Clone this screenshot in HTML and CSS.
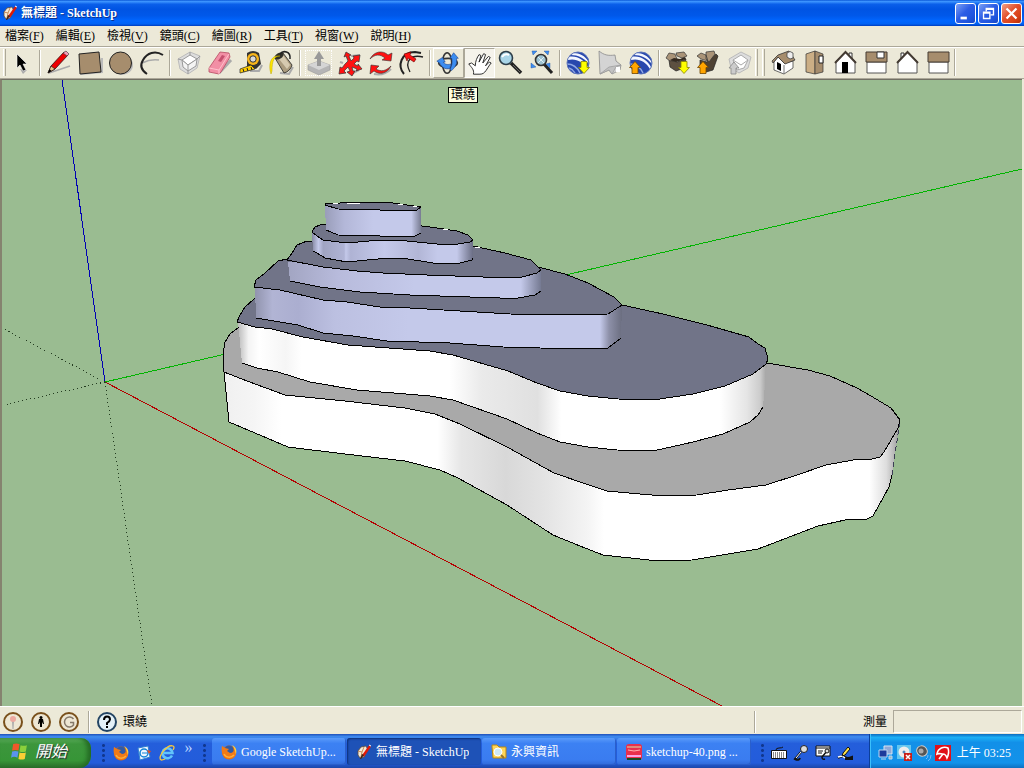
FILE: index.html
```html
<!DOCTYPE html>
<html lang="zh-Hant">
<head>
<meta charset="utf-8">
<title>無標題 - SketchUp</title>
<link rel="stylesheet" href="styles.css">
</head>
<body>
<svg class="defs" aria-hidden="true">
  <defs>
    <symbol id="app" viewBox="0 0 16 16"><path d="M2 7 5 3l5-1 2 4-4 7-4 1-2-3z" fill="#f4ead8" stroke="#5b4a3c" stroke-width=".8"/><path d="M2 7l4 1 2-5M6 8l-1 5" fill="none" stroke="#c88a55"/><path d="M14 2 7 12" stroke="#e01808" stroke-width="2.4"/><path d="m8 11-3 4-1 0 2-5z" fill="#421"/><path d="m13 1 2 1" stroke="#fff"/></symbol>
    <symbol id="firefox" viewBox="0 0 16 16"><circle cx="8" cy="8.5" r="7" fill="#e66a0c"/><circle cx="8" cy="6" r="4.600" fill="#315ba5"/><path d="M1 2c1 0 2 2 3 2l4 1-2 2 3 2c3 0 5-2 4-5 3 3 3 8-1 10C5 17-1 11 1 2z" fill="#f07a18"/><path d="M3 10c2 4 7 4 10 1" fill="none" stroke="#ffb03a" stroke-width="1.500"/><path d="M11 1c4 2 5 5 4 9-1-2-1-6-4-9z" fill="#ffd23c"/></symbol>
    <symbol id="arrowdn" viewBox="0 0 12 14"><path d="M3 1h6v6h2.500L6 13 .5 7H3z" fill="#ff0" stroke="#8a8700" stroke-width=".8"/></symbol>
    <symbol id="arrowup" viewBox="0 0 12 14"><path d="M3 13h6V7h2.500L6 1 .5 7H3z" fill="#ffa500" stroke="#704500" stroke-width=".8"/></symbol>
    <symbol id="globe" viewBox="0 0 24 24"><circle cx="12" cy="12" r="11" fill="#2847ad"/><path d="M2 6c9-2 16 3 20 10l-1 2C17 11 10 7 2 9zM7 2c7 0 12 3 15 8l1 3C18 7 12 4 5 4z" fill="#f4f7ff"/><path d="M1 13c5 0 10 3 13 9M3 17c3 1 5 3 6 5" fill="none" stroke="#90a8e4" stroke-width="1.500"/><circle cx="12" cy="12" r="11" fill="none" stroke="#5c74b8"/></symbol>
  </defs>
</svg>

<div class="desktop">
<header class="titlebar">
  <svg class="i16" aria-hidden="true"><use href="#app"/></svg>
  <h1>無標題 - SketchUp</h1>
  <div class="winbtns">
    <button class="wb" aria-label="最小化"><svg viewBox="0 0 21 21"><path d="M5 14h7v3H5z" fill="#fff"/></svg></button>
    <button class="wb" aria-label="還原"><svg viewBox="0 0 21 21"><path d="M8 8V5h8v7h-3M8 6h8M5 9h7v7H5zM5 10h7" fill="none" stroke="#fff" stroke-width="1.500"/></svg></button>
    <button class="wb close" aria-label="關閉"><svg viewBox="0 0 21 21"><path d="m5 5 11 11m0-11-11 11" stroke="#fff" stroke-width="2.500"/></svg></button>
  </div>
</header>

<nav class="menubar" aria-label="主選單">
  <button>檔案(<u>F</u>)</button><button>編輯(<u>E</u>)</button><button>檢視(<u>V</u>)</button><button>鏡頭(<u>C</u>)</button><button>繪圖(<u>R</u>)</button><button>工具(<u>T</u>)</button><button>視窗(<u>W</u>)</button><button>說明(<u>H</u>)</button>
</nav>

<div class="toolbar" role="toolbar" aria-label="工具列">
  <span class="edge"></span>
  <div class="tools">
    <button aria-label="選取"><svg viewBox="0 0 31 30"><path d="m14 21 3 5 4-4" fill="#aaa"/><path d="M11 6v14l3-3 3 6 3-1-3-6h4z" fill="#000" stroke="#fff" stroke-width=".6"/></svg></button>
    <span class="sep"></span>
    <button aria-label="線條"><svg viewBox="0 0 31 30"><path d="M6 25 27 18" stroke="#aaa" stroke-width="1.500"/><path d="m5 25 3-7 13-14 4 3-13 14z" fill="#e00" stroke="#311" stroke-width=".8"/><path d="m5 25 3-7 4 3z" fill="#e9c48a" stroke="#222" stroke-width=".7"/><path d="m5 25 1.500-4 2 2z"/><path d="m20 5 3-2 3 3-2 2z" fill="#f59ab4" stroke="#333" stroke-width=".6"/></svg></button>
    <button aria-label="矩形"><svg viewBox="0 0 31 30"><path d="m7 26 21-2V10" fill="none" stroke="#bbb" stroke-width="2"/><path d="m5 6 20-2 2 20-21 2z" fill="#a68d6d" stroke="#222"/></svg></button>
    <button aria-label="圓形"><svg viewBox="0 0 31 30"><ellipse cx="17" cy="17" rx="11" ry="10" fill="#bbb"/><circle cx="15.500" cy="15" r="11" fill="#a68d6d" stroke="#222"/></svg></button>
    <button aria-label="圓弧"><svg viewBox="0 0 31 30"><path d="M6 15c6-3 11-4 17-3" fill="none" stroke="#aaa" stroke-width="1.500"/><path d="M11 26C5 22 4 17 7 12 11 5 19 2 27 7" fill="none" stroke="#222" stroke-width="2"/></svg></button>
    <span class="sep"></span>
    <button aria-label="元件"><svg viewBox="0 0 31 30"><path d="m5 11 12-7 10 4-3 12-9 6-8-5z" fill="#ddd" stroke="#bbb"/><path d="m9 12 8-5 7 4-9 6z" fill="#fff" stroke="#999"/><path d="m9 12 6 5 9-6-1 7-8 5-5-4z" fill="#f4f4f4" stroke="#999"/><path d="m15 17v6M5 11l4 1m8-8v3m10 1-3 3M15 26v-3" fill="none" stroke="#999"/></svg></button>
    <button aria-label="擦除"><svg viewBox="0 0 31 30"><path d="m15 25 12-13" fill="none" stroke="#aaa" stroke-width="3"/><path d="M5 20 16 4l9 1 1 4-9 15-2 2-10-2z" fill="#f28fa5" stroke="#b64b62" stroke-width=".8"/><path d="m5 20 10 2L25 6M15 22v4" fill="none" stroke="#ffc0cc"/><path d="m14 13 4-6 3 1-4 6z" fill="#c6506e"/></svg></button>
    <button aria-label="捲尺"><svg viewBox="0 0 31 30"><path d="M15 23h9l3-6" stroke="#aaa" stroke-width="2" fill="none"/><path d="M12 5q6-4 12 0l2 11-5 5-9-2z" fill="#333"/><circle cx="18" cy="11" r="6" fill="#f7b51c"/><circle cx="18" cy="11" r="3.200" fill="#d9d9d9" stroke="#333"/><path d="m16 17-11 4v4l15-4z" fill="#fc0" stroke="#222" stroke-width=".7"/><path d="m8 21 1 3m3-4 1 3m3-4 1 3" stroke="#222"/></svg></button>
    <button aria-label="顏料桶"><svg viewBox="0 0 31 30"><path d="m14 25 9 1 4-7" stroke="#aaa" stroke-width="2" fill="none"/><path d="m9 10 8-5 9 12c-1 4-4 7-8 8z" fill="#aa9b7e" stroke="#222" stroke-width=".8"/><path d="m17 7 7 10-3 4-8-10z" fill="#d6cab0"/><ellipse cx="13" cy="8" rx="5" ry="3" transform="rotate(-30 13 8)" fill="#302f28"/><path d="M14 6c3-4 11-3 10 5" fill="none" stroke="#222" stroke-width="1.500"/><path d="M14 8c-6 0-8 5-8 15l-1 3-1-4C3 13 6 7 14 8z" fill="#ffe600" stroke="#bba600" stroke-width=".5"/></svg></button>
    <span class="sep"></span>
    <button class="ghost" aria-label="推拉"><svg viewBox="0 0 31 30"><path d="m5 17 11-4 11 4v5l-11 5-11-5z" fill="#b5b5b5" stroke="#999" stroke-width=".6"/><path d="m5 17 11 5 11-5-11-4z" fill="#d5d5d5"/><path d="M14 18v-7h-3l5-8 5 8h-3v7z" fill="#999"/></svg></button>
    <button aria-label="移動"><svg viewBox="0 0 31 30"><path d="m17 8 9-1M9 15l-3-1m19 8-8 4" stroke="#aaa" stroke-width="2"/><path d="M14 13 12 8l-2 1 2-5 5 3-2 1 2 5 3-3-1-2 7-1-1 7-2-1-3 3 4 2 0-2 4 5-6 2 1-2-5-2 1 4h2l-3 5-5-4 3-1-2-4-4 4 2 2-7 1 1-7 2 1 3-4z" fill="#f11" stroke="#333" stroke-width=".7"/></svg></button>
    <button aria-label="旋轉"><svg viewBox="0 0 31 30"><path d="M9 26q10 2 17-5" fill="none" stroke="#aaa" stroke-width="2"/><path d="M5 11C9 3 18 2 23 7l4-2-1 8-9-1 3-2C15 6 10 6 5 11zM26 18c-4 8-12 9-17 5l-4 3 1-9 8 1-3 3c5 3 10 2 15-3z" fill="#f11" stroke="#333" stroke-width=".6"/></svg></button>
    <button aria-label="偏移"><svg viewBox="0 0 31 30"><path d="M8 26C1 18 5 4 19 4l6 1" fill="none" stroke="#222" stroke-width="2"/><path d="M14 24C8 13 15 6 27 9" fill="none" stroke="#222" stroke-width="1.300"/><path d="M8 6l7-2-1 3 6 4-2 3-6-4-1 3z" fill="#f11" stroke="#600" stroke-width=".6"/></svg></button>
    <span class="sep"></span>
    <button class="hover" aria-label="環繞"><svg viewBox="0 0 31 30"><ellipse cx="15" cy="15" rx="10" ry="5" fill="none" stroke="#333" stroke-width="1.800"/><ellipse cx="14" cy="15" rx="5" ry="11" fill="none" stroke="#333" stroke-width="1.800"/><path d="m3 13 6-4 3 5h-2c2 3 5 3 8 2l-1 5c-5 1-9-1-11-6zM17 10l4-6 5 6h-2c1 6-1 9-5 13l-2-1c2-4 3-7 2-12z" fill="#3c8df0" stroke="#173d89" stroke-width=".6"/></svg></button>
    <button class="pressed" aria-label="平移"><svg viewBox="0 0 31 30"><path d="M9 27c1-5-2-7-5-11l3-1 4 3c0-5 2-9 4-12l2 1-2 7 5-9 2 1-3 9 6-7 2 1-5 9 4-4 2 1c-5 6-6 12-12 12z" fill="#fff" stroke="#222" stroke-width="1"/></svg></button>
    <button aria-label="縮放"><svg viewBox="0 0 31 30"><path d="m16 15 10 10" stroke="#222" stroke-width="3.500"/><path d="m18 17 7 7" stroke="#888" stroke-width=".7"/><circle cx="11" cy="10" r="6.500" fill="#a9d5e8" stroke="#2d3d48" stroke-width="1.600"/><path d="M7 9q3-4 7-2" stroke="#fff" stroke-width="2" fill="none"/></svg></button>
    <button aria-label="縮放範圍"><svg viewBox="0 0 31 30"><path d="m18 16 8 9" stroke="#222" stroke-width="3"/><circle cx="15" cy="12" r="5.500" fill="#9fc3d1" stroke="#333" stroke-width="1.600"/><path d="M12 9l6 6m0-6-6 6" stroke="#e1f0f4"/><path d="M6 3h5L7 7zM23 3h-5l4 4zM5 20v-5l5 4zM24 15v5l-4-4z" fill="#3d8cf0" stroke="#1a4b99" stroke-width=".4"/></svg></button>
    <span class="sep"></span>
    <button aria-label="取得目前視圖"><svg viewBox="0 0 31 30"><use href="#globe" x="3" y="3" width="24" height="24"/><use href="#arrowdn" x="15" y="12" width="12" height="15"/></svg></button>
    <button aria-label="切換地形"><svg viewBox="0 0 31 30"><path d="M5 3c5 4 9 5 16 4l1 6 5 4-1 5-8 4-3-4-9 4z" fill="#d4d4d4" stroke="#8a8a8a" stroke-width=".8"/><path d="m6 26 9-7 12-2-5 2-4 7-3-4z" fill="#c2c2c2" stroke="#999" stroke-width=".7"/><path d="M22 19h4v5h-4z" fill="#fff"/></svg></button>
    <button aria-label="放置模型"><svg viewBox="0 0 31 30"><use href="#globe" x="4" y="3" width="24" height="24"/><use href="#arrowup" x="4" y="12" width="12" height="15"/></svg></button>
    <span class="sep"></span>
    <button aria-label="取得模型"><svg viewBox="0 0 31 30"><path d="m7 12 8 2 9-3-2 9-8 3-6-4z" fill="#5d5040" stroke="#222" stroke-width=".7"/><path d="m4 10 3-5 6 1 2 5-7 2zM14 5l8-1 3 4-5 2-5-2z" fill="#aa9478" stroke="#333" stroke-width=".7"/><path d="m8 12 4-2 6 1 5-2 1 2-10 3z" fill="#342a20"/><use href="#arrowdn" x="16" y="12" width="12" height="15"/></svg></button>
    <button aria-label="共用模型"><svg viewBox="0 0 31 30"><path d="m7 12 7 2 9-8 2 2-5 14-7 2-6-5z" fill="#4e4233" stroke="#222" stroke-width=".7"/><path d="m4 8 4-3 5 2 2 6-7-2zM13 4l8-1 1 3-6 8-3-3z" fill="#aa9478" stroke="#333" stroke-width=".7"/><use href="#arrowup" x="4" y="12" width="12" height="15"/></svg></button>
    <button aria-label="共用元件"><svg viewBox="0 0 31 30"><path d="m5 11 12-7 10 5-3 11-9 5-8-5z" fill="#ddd" stroke="#bbb"/><path d="m9 12 8-5 7 5-4 8-7 2z" fill="#fff" stroke="#aaa"/><path d="m9 12 8 5 7-5" fill="none" stroke="#aaa"/><path d="M7 26h5v-6h3l-5-6-5 6h2z" fill="#ccc" stroke="#888" stroke-width=".8"/></svg></button>
  </div>
  <span class="edge"></span><span class="edge"></span>
  <div class="tools views">
    <button aria-label="等角視圖"><svg viewBox="0 0 31 30"><path d="m6 14 4-5 6 6 9-2v7l-9 6-10-4z" fill="#fff" stroke="#444" stroke-width=".8"/><path d="m4 13 6-6 11-4 6 9-10 4-7-7-5 6z" fill="#a68d6d" stroke="#333" stroke-width=".8"/><path d="M16 17v9" stroke="#777"/><path d="m9 14 4 2v7l-4-2z" fill="#000"/><path d="M19 5q3-3 6 0v5l-3 1-3-2z" fill="#eee" stroke="#444" stroke-width=".8"/></svg></button>
    <button aria-label="上視圖"><svg viewBox="0 0 31 30"><path d="m7 6 9-3v23l-9-2z" fill="#cbae85" stroke="#333" stroke-width=".7"/><path d="m16 3 8 3v18l-8 2z" fill="#a68d6d" stroke="#333" stroke-width=".7"/><path d="M20 8h4v7h-4z" fill="#fff" stroke="#222"/></svg></button>
    <button aria-label="前視圖"><svg viewBox="0 0 31 30"><path d="M19 5h3v6h-3z" fill="#fff" stroke="#333"/><path d="M6 13 15.500 4 25 13v12H6z" fill="#fff" stroke="#555"/><path d="M5 15 15.500 4 26 15" fill="none" stroke="#443b33" stroke-width="2"/><path d="M12 14h6v11h-6z"/></svg></button>
    <button aria-label="右視圖"><svg viewBox="0 0 31 30"><path d="M6 14h19v11H6z" fill="#fff" stroke="#555"/><path d="M5 4h21v10H5z" fill="#a68d6d" stroke="#443b33"/><path d="M16 4h7v6h-7z" fill="#fff" stroke="#333"/></svg></button>
    <button aria-label="後視圖"><svg viewBox="0 0 31 30"><path d="M9 5h3v6H9z" fill="#fff" stroke="#333"/><path d="M6 13 15.500 4 25 13v12H6z" fill="#fff" stroke="#555"/><path d="M5 15 15.500 4 26 15" fill="none" stroke="#443b33" stroke-width="2"/></svg></button>
    <button aria-label="左視圖"><svg viewBox="0 0 31 30"><path d="M6 14h19v11H6z" fill="#fff" stroke="#555"/><path d="M5 4h21v10H5z" fill="#a68d6d" stroke="#443b33"/></svg></button>
  </div>
  <span class="edge"></span>
</div>

<main class="viewport">
<svg class="model" viewBox="2 80 1020 626" preserveAspectRatio="xMidYMid slice" role="img" aria-label="階梯地形模型">
  <defs>
    <linearGradient id="s1" gradientUnits="userSpaceOnUse" x1="220" y1="0" x2="900" y2="0"><stop offset="0" stop-color="#efefef"/><stop offset=".05" stop-color="#f5f5f5"/><stop offset=".09" stop-color="#fff"/><stop offset=".32" stop-color="#fff"/><stop offset=".355" stop-color="#e6e6e6"/><stop offset=".42" stop-color="#d8d8d8"/><stop offset=".48" stop-color="#e4e4e4"/><stop offset=".54" stop-color="#f4f4f4"/><stop offset=".565" stop-color="#fff"/><stop offset=".955" stop-color="#fff"/><stop offset=".98" stop-color="#ddd"/><stop offset="1" stop-color="#999"/></linearGradient>
    <linearGradient id="s2" gradientUnits="userSpaceOnUse" x1="238" y1="0" x2="768" y2="0"><stop offset="0" stop-color="#bbb"/><stop offset=".02" stop-color="#f4f4f4"/><stop offset=".04" stop-color="#fff"/><stop offset=".09" stop-color="#f5f5f5"/><stop offset=".12" stop-color="#fff"/><stop offset=".4" stop-color="#fff"/><stop offset=".46" stop-color="#eaeaea"/><stop offset=".565" stop-color="#e0e0e0"/><stop offset=".61" stop-color="#fff"/><stop offset=".91" stop-color="#fff"/><stop offset=".96" stop-color="#e5e5e5"/><stop offset=".985" stop-color="#ccc"/><stop offset="1" stop-color="#999"/></linearGradient>
    <linearGradient id="s3" gradientUnits="userSpaceOnUse" x1="254" y1="0" x2="622" y2="0"><stop offset="0" stop-color="#8f92ab"/><stop offset=".05" stop-color="#b1b4d4"/><stop offset=".12" stop-color="#abaed0"/><stop offset=".22" stop-color="#bcc0e1"/><stop offset=".42" stop-color="#c4c9ea"/><stop offset=".94" stop-color="#c4c9ea"/><stop offset=".965" stop-color="#8d90a8"/><stop offset="1" stop-color="#6b6e80"/></linearGradient>
    <linearGradient id="s4" gradientUnits="userSpaceOnUse" x1="288" y1="0" x2="541" y2="0"><stop offset="0" stop-color="#a2a5c2"/><stop offset=".2" stop-color="#b8bbdc"/><stop offset=".5" stop-color="#c4c9ea"/><stop offset=".92" stop-color="#c4c9ea"/><stop offset="1" stop-color="#757a92"/></linearGradient>
    <linearGradient id="s5" gradientUnits="userSpaceOnUse" x1="312" y1="0" x2="473" y2="0"><stop offset="0" stop-color="#8588a2"/><stop offset=".04" stop-color="#c4c9ea"/><stop offset=".07" stop-color="#a0a4c2"/><stop offset=".2" stop-color="#b0b4d5"/><stop offset=".21" stop-color="#c4c9ea"/><stop offset=".24" stop-color="#afb3d4"/><stop offset=".45" stop-color="#c4c9ea"/><stop offset=".66" stop-color="#b2b6d6"/><stop offset=".78" stop-color="#c4c9ea"/><stop offset=".9" stop-color="#c4c9ea"/><stop offset="1" stop-color="#6b6e85"/></linearGradient>
    <linearGradient id="s6" gradientUnits="userSpaceOnUse" x1="325" y1="0" x2="421" y2="0"><stop offset="0" stop-color="#999db9"/><stop offset=".2" stop-color="#b3b7d8"/><stop offset=".5" stop-color="#c4c9ea"/><stop offset=".9" stop-color="#c4c9ea"/><stop offset="1" stop-color="#777b91"/></linearGradient>
  </defs>
  <path class="ground" d="M-1000-1000h3000v3000h-3000z"/>
  <g class="axes">
    <path class="blue" d="M62 80 105 382"/>
    <path class="green" d="M105 382 1022 169"/>
    <path class="red" d="M105 382 722 706"/>
    <path class="neg" d="M105 382 4 329M105 382 4 405M105 382l47 324"/>
  </g>
  <g class="solid">
    <path class="side" fill="url(#s1)" d="M224 372 229 422 288 447 345 454 405 461 440 470 458 478 507 505 553 535 580 546 603 555 658 561 692 560 758 549 818 526 845 520 867 519 873 516 889 487 892 475 900 420 700 380z"/>
    <path class="rim" d="M224 372 229 422 288 447 345 454 405 461 440 470 458 478 507 505 553 535 580 546 603 555 658 561 692 560 758 549 818 526 845 520 867 519 873 516 889 487 892 475"/>
    <path class="crease" d="M892 475 900 420"/>
    <path class="gray" d="M224 372 223 355 225 342 230 334 238 328 400 300 767 363 808 370 830 376 857 388 871 396 891 408 900 420 898 428 884 452 880 457 872 459 853 460 826 465 797 475 766 485 728 490 697 495 663 496 640 494 607 491 586 484 554 473 507 447 460 424 435 414 405 408 345 401 285 395 247 381z"/>
    <path class="side" fill="url(#s2)" d="M238 322 242 363 257 368 278 372 310 382 357 390 430 396 453 400 507 419 537 433 560 442 588 447 617 450 653 451 693 442 723 434 750 422 758 415 763 407 767 362z"/>
    <path class="rim" d="M242 363 257 368 278 372 310 382 357 390 430 396 453 400 507 419 537 433 560 442 588 447 617 450 653 451 693 442 723 434 750 422 758 415 763 407"/>
    <path class="dark" d="M237 322 239 317 245 307 254 299 400 270 622 305 663 314 707 325 749 337 758 344 765 348 768 359 766 364 753 374 725 386 693 394 653 400 618 399 588 396 560 391 537 383 508 371 453 355 430 351 348 345 303 337 272 329 255 327z"/>
    <path class="side" fill="url(#s3)" d="M255 287 256 318 298 325 323 333 353 336 387 341 450 343 503 347 540 348 602 349 608 348 621 338 622 305z"/>
    <path class="rim" d="M256 318 298 325 323 333 353 336 387 341 450 343 503 347 540 348 602 349 608 348 621 338"/>
    <path class="dark" d="M254 287 256 280 265 273 278 261 287 259 400 240 538 267 565 274 588 283 614 297 622 305 608 314 560 315 510 314 410 308 380 307 347 302 323 300 280 290z"/>
    <path class="side" fill="url(#s4)" d="M288 262 290 281 320 287 360 292 410 295 500 298 518 298 535 295 541 291 541 270z"/>
    <path class="rim" d="M290 281 320 287 360 292 410 295 500 298 518 298 535 295 541 291"/>
    <path class="dark" d="M287 260 292 253 297 245 307 241 312 241 400 230 473 246 505 253 531 260 541 270 537 273 522 277 483 277 427 275 383 273 357 271 323 267z"/>
    <path class="side" fill="url(#s5)" d="M312 232 313 251 317 253 325 258 347 262 367 260 390 258 408 259 433 263 460 263 472 260 473 258 473 240z"/>
    <path class="rim" d="M313 251 317 253 325 258 347 262 367 260 390 258 408 259 433 263 460 263 472 260 473 258"/>
    <path class="dark" d="M312 232 315 227 320 225 400 220 422 226 437 228 457 231 468 235 473 240 470 242 458 244 437 244 407 241 380 240 347 243 323 240 317 236z"/>
    <path class="side" fill="url(#s6)" d="M325 205 326 230 338 235 380 236 415 236 421 233 421 207z"/>
    <path class="rim" d="M326 230 338 235 380 236 415 236 421 233"/>
    <path class="dark" d="M325 203 340 203 367 202 393 203 421 207 417 210 380 210 338 209 325 205z"/>
  </g>
  <path class="glint" d="M333 203h5M347 203h13M398 204l5 1M413 206h4M443 229h5M475 247h5"/>
</svg>
<span class="tip" role="tooltip">環繞</span>
</main>

<footer class="status">
  <div class="badges">
    <button aria-label="地理位置"><svg viewBox="0 0 20 20"><circle cx="10" cy="10" r="9" fill="#eee7d4" stroke="#79501b" stroke-width="2"/><path d="M9 9h2l-.5 8h-1z" fill="#aaa"/><circle cx="10" cy="7" r="3" fill="#eda9a0"/></svg></button>
    <button aria-label="作者"><svg viewBox="0 0 20 20"><circle cx="10" cy="10" r="9" fill="#eee7d4" stroke="#79501b" stroke-width="2"/><circle cx="10" cy="5.500" r="1.500"/><path d="M8 7h4l1 5h-1l-1-2v5H9v-5l-1 2H7z"/></svg></button>
    <button aria-label="帳號"><svg viewBox="0 0 20 20"><circle cx="10" cy="10" r="9" fill="#eee7d4" stroke="#79501b" stroke-width="2"/><path d="M14.500 7A5 5 0 1 0 14.500 13V10.500H11" fill="none" stroke="#85796a" stroke-width="1.500"/></svg></button>
  </div>
  <span class="sep"></span>
  <button aria-label="說明"><svg viewBox="0 0 20 20"><circle cx="10" cy="10" r="9" fill="#e4f1f8" stroke="#234463" stroke-width="2"/><path d="M7 8q0-3.500 3-3.500t3 3q0 1.500-3 3.500v2" fill="none" stroke="#000" stroke-width="2"/><path d="M9 14h2v2H9z"/></svg></button>
  <span class="hint">環繞</span>
  <span class="sep"></span>
  <label for="measure">測量</label>
  <input id="measure" type="text">
</footer>

<div class="taskbar">
  <button class="start"><svg viewBox="0 0 18 18" aria-hidden="true"><path d="M3 2q3-1 6 0L8 8Q5 7 2 8z" fill="#f0582a"/><path d="M10 3q3 1 6 0l-1 6q-3 1-6 0z" fill="#8bd03c"/><path d="M2 9q3-1 6 0l-1 6q-3-2-6 0z" fill="#5b93ee"/><path d="M9 10q3 1 6 0l-1 6q-3 1-6 0z" fill="#fbcf35"/></svg>開始</button>
  <div class="quick">
    <span class="grip"></span>
    <button aria-label="Firefox"><svg class="i16"><use href="#firefox"/></svg></button>
    <button aria-label="Outlook Express"><svg class="i16" viewBox="0 0 16 16"><path d="m2 3 10-2 2 11-10 3z" fill="#eef6ff" stroke="#3180cf"/><circle cx="8" cy="8" r="4" fill="none" stroke="#1485d8" stroke-width="1.500"/><path d="M6 8h5" stroke="#1485d8"/><path d="m11 5 4 1-2 3z" fill="#e34b20"/></svg></button>
    <button aria-label="Internet Explorer"><svg class="i16" viewBox="0 0 16 16"><path d="M13 10.500A5 5 0 1 1 13.500 8H5" fill="none" stroke="#62c4fa" stroke-width="2.600"/><path d="M2 15C-2 12 8-1 14 1q2 1 0 4M2 15q2 0 4-1" fill="none" stroke="#f7c83e" stroke-width="1.300"/></svg></button>
    <button class="more" aria-label="更多">»</button>
    <span class="grip"></span>
  </div>
  <div class="tasks">
    <button><svg class="i16"><use href="#firefox"/></svg><span>Google SketchUp...</span></button>
    <button class="active"><svg class="i16"><use href="#app"/></svg><span>無標題 - SketchUp</span></button>
    <button><svg class="i16" viewBox="0 0 16 16"><path d="M1 3V1h5l2 2h7v11H2z" fill="#ffd659" stroke="#b88714"/><circle cx="7" cy="8" r="4" fill="#cfe9f5" stroke="#fff"/><path d="m10 11 3 3" stroke="#997327" stroke-width="2"/></svg><span>永興資訊</span></button>
    <button><svg class="i16" viewBox="0 0 16 16"><rect width="16" height="16" rx="3" fill="#e8304c"/><path d="M1 2h14v2H1z" fill="#e08a78"/><path d="m2 6 6 1 6-1" fill="none" stroke="#ffb0ad"/><path d="M1 11h14v2H1z" fill="#f9a4e6"/><path d="M1 14h14v2H1z" fill="#174c24"/></svg><span>sketchup-40.png ...</span></button>
  </div>
  <div class="lang">
    <span class="grip"></span>
    <button aria-label="鍵盤"><svg class="i16" viewBox="0 0 16 16"><path d="M5 5q0-2 3-2t4-1" fill="none" stroke="#111"/><path d="M.5 5.500h15v8H.5z" fill="#fff" stroke="#111"/><path d="M2 8h12M2 10h12M2 12h12" stroke="#111" stroke-dasharray="1 1"/></svg></button>
    <button aria-label="麥克風"><svg class="i16" viewBox="0 0 16 16"><path d="m8 7-6 7q4 2 5-1" fill="none" stroke="#111" stroke-width="2"/><path d="m8 7-5 6" stroke="#fff"/><circle cx="11" cy="4" r="3.500" fill="#ddd" stroke="#222"/></svg></button>
    <button aria-label="語言工具"><svg class="i16" viewBox="0 0 16 16"><path d="M1 1h14v10H1z" fill="#fff" stroke="#111"/><path d="M1 3h14M3 6h5M3 8h4" stroke="#111"/><path d="m12 6-5 6q0 3 3 2" fill="none" stroke="#111" stroke-width="1.500"/><circle cx="12" cy="6" r="2" fill="#ddd" stroke="#111"/></svg></button>
    <button aria-label="手寫板"><svg class="i16" viewBox="0 0 16 16"><path d="M1 13q5-3 7-1t7 0v2H8" fill="none" stroke="#111" stroke-width="2"/><path d="m1 12 4-1 3 2" stroke="#fff" stroke-width="1.500" fill="none"/><path d="m11 2-5 6-1 3 3-1 5-6z" fill="#ffe249" stroke="#111"/></svg></button>
  </div>
  <div class="tray">
    <svg class="i16" viewBox="0 0 16 16"><path d="M6 1h8v8H6z" fill="#8fa9d8" stroke="#d6e4f3"/><path d="M1 5h8v7H1z" fill="#1d3b9c" stroke="#bdd7f2"/><path d="M3 14h5M11 11h3v3h-3z" stroke="#bdd7f2" fill="#9bb"/></svg>
    <svg class="i16" viewBox="0 0 16 16"><path d="M0 0h14v14H0z" fill="#64c6ef"/><circle cx="7" cy="7" r="5.500" fill="#eee"/><circle cx="7" cy="7" r="1.500" fill="#58b"/><path d="M7 8h8v8H7z" fill="#c92018"/><path d="m9 10 4 4m0-4-4 4" stroke="#fff" stroke-width="1.500"/></svg>
    <svg class="i16" viewBox="0 0 16 16"><ellipse cx="6" cy="6" rx="5.500" ry="5" transform="rotate(35 6 6)" fill="#555" stroke="#ccc"/><circle cx="5" cy="6" r="2.500" fill="#aaa"/><path d="M10 14q2-1 2-4m0 6q3-2 3-6" fill="none" stroke="#77baff"/></svg>
    <svg class="i16" viewBox="0 0 16 16"><path d="M0 0h16v16H0z" fill="#e01018"/><path d="M2 9C3 3 9 1 13 3c1 3 1 6-1 10-1-3-2-4-4-4S4 8 2 9zM8 9l-4 5" fill="none" stroke="#fff" stroke-width="1.600"/></svg>
    <time datetime="03:25">上午 03:25</time>
  </div>
</div>
</div>
</body>
</html>
```
FILE: styles.css
```css
* { box-sizing: border-box; }
body { margin: 0; font: 12px/16px "Liberation Serif", "Noto Sans CJK TC", serif; color: #000; }
button { font: inherit; color: inherit; background: none; border: 0; padding: 0; margin: 0; }
svg { display: block; }
.defs { position: absolute; width: 0; height: 0; }
.i16 { width: 16px; height: 16px; flex: none; }
.desktop { display: flex; flex-direction: column; height: 100vh; background: #ece9d8; overflow: hidden; }

.titlebar { display: flex; align-items: center; gap: 3px; height: 26px; flex: none; padding: 0 2px; color: #fff;
  background: linear-gradient(#0a58d8 0, #3d95ff 6%, #0a5fea 16%, #0054e3 35%, #0058ea 60%, #0066ff 80%, #0062f4 92%, #003cbd 100%); }
.titlebar h1 { margin: 0; flex: 1; font-size: 12px; font-weight: bold; text-shadow: 1px 1px #0a318c; }
.winbtns { display: flex; gap: 2px; }
.wb { width: 21px; height: 21px; border: 1px solid #fff; border-radius: 3px; background: linear-gradient(135deg, #7ba0f5, #2c5de5 45%, #1f55de 75%, #1747c5); }
.wb svg { width: 19px; height: 19px; }
.wb.close { background: linear-gradient(135deg, #f0a088, #e2512c 45%, #d84117 75%, #b02e0b); }

.menubar { display: flex; flex: none; height: 20px; align-items: center; margin-left: -1px; }
.menubar button { padding: 0 6px; }
.menubar u { text-underline-offset: 2px; }

.toolbar { display: flex; flex: none; height: 33px; padding: 1px 0 1px 3px; border-top: 1px solid #aca899; border-bottom: 1px solid #aca899; box-shadow: inset 0 1px #fff; }
.tools { display: flex; align-items: center; }
.tools button { width: 31px; height: 30px; }
.tools svg { width: 100%; height: 100%; }
.edge { width: 3px; border-left: 1px solid #fff; border-right: 1px solid #aca899; margin: 1px 0; }
.edge + .edge { margin-left: 4px; }
.views { margin-left: 3px; }
.views + .edge { border-left-color: #aca899; border-right-color: #fff; width: 2px; }
.sep { width: 2px; height: 26px; margin: 0 2px; background: linear-gradient(90deg, #aca899 50%, #fff 50%); flex: none; }
.tools .ghost svg { outline: 1px dotted #fff; outline-offset: -3px; }
.tools .hover { border: 1px solid; border-color: #fff #aca899 #aca899 #fff; }
.tools .pressed { border: 1px solid; border-color: #aca899 #fff #fff #aca899; background: #f5f3eb; }

.viewport { position: relative; flex: 1; min-height: 0; border: 1px solid #716f64; border-width: 1px 0 0 2px; border-left-color: #85836f; margin-right: 2px; }
.model { width: 100%; height: 100%; shape-rendering: crispEdges; }
.ground { fill: #9abc91; }
.axes path { fill: none; stroke-width: 1; }
.axes .blue { stroke: #0000b4; }
.axes .green { stroke: #00b400; }
.axes .red { stroke: #b40000; }
.axes .neg { stroke: #243c20; stroke-dasharray: 1 3; }
.solid path { stroke: #000; stroke-width: 1; stroke-linejoin: round; }
.solid .side { stroke: none; }
.solid .rim { fill: none; }
.solid .crease { fill: none; stroke: #3c3f55; stroke-dasharray: 5 3; }
.gray { fill: #a9a9a9; }
.dark { fill: #717488; }
.glint { fill: none; stroke: #fff; }
.tip { position: absolute; left: 446px; top: 7px; border: 1px solid #000; background: #ffffe1; padding: 0 2px; line-height: 14px; }

.status { display: flex; flex: none; align-items: center; height: 28px; padding: 2px 2px 0 3px; border-top: 1px solid #fff; }
.status svg { width: 20px; height: 20px; }
.badges { display: flex; gap: 8px; }
.status .sep { height: 22px; margin: 0 7px 0 9px; }
.hint { flex: 1; padding-left: 6px; }
.status .hint + .sep { margin-right: 107px; }
.status label { padding-right: 6px; }
.status input { width: 129px; height: 23px; border: 1px solid; border-color: #aca899 #fff #fff #aca899; background: transparent; font: inherit; padding: 0 4px; border-radius: 0; }

.taskbar { display: flex; flex: none; height: 34px; color: #fff; background: linear-gradient(#1f4fb8 0, #3f8cf0 8%, #3578e6 16%, #245edb 28%, #235cdb 85%, #1c47a8 100%); }
.start { display: flex; align-items: center; gap: 6px; width: 91px; margin-top: 4px; padding: 0 0 3px 10px; font-size: 16px; font-style: italic; text-shadow: 1px 1px 1px #223; border-radius: 0 10px 12px 0; background: linear-gradient(#5fb25f, #3c963c 20%, #379537 75%, #2b6f2b); box-shadow: inset -4px 0 4px #256c25; }
.start svg { width: 19px; height: 19px; }
.quick, .lang, .tray { display: flex; align-items: center; padding-top: 3px; }
.quick { width: 121px; gap: 7px; padding-left: 10px; }
.more { font-size: 16px; width: 13px; padding-bottom: 10px; color: #b8d4ff; }
.grip { width: 5px; height: 20px; flex: none; background: radial-gradient(circle, #10378f 1px, transparent 2px) 0 0 / 5px 5px; }
.tasks { display: flex; flex: 1; min-width: 0; gap: 1px; padding: 4px 0 3px; }
.tasks button { flex: 1 1 0; max-width: 134px; min-width: 0; display: flex; align-items: center; gap: 4px; padding: 0 9px; border-radius: 3px; background: linear-gradient(#5a9bfa, #3c81f3 20%, #3a7cf0 80%, #3069d8); box-shadow: inset -1px -1px #2a5fcb; text-align: left; }
.tasks span { white-space: nowrap; overflow: hidden; }
.tasks .active { background: #1e52b7; box-shadow: inset 1px 1px 2px #0c2f78; }
.lang { gap: 6px; padding-left: 6px; padding-right: 16px; }
.tray { gap: 3px; padding: 3px 13px 0 8px; background: linear-gradient(#0d6bbf 0, #1cb0f5 10%, #1290e8 25%, #1292ea 85%, #0e70c0 100%); border-left: 1px solid #0b3f9a; box-shadow: inset 1px 0 #3cc0fb; }
.tray time { padding-left: 3px; white-space: nowrap; }
```
